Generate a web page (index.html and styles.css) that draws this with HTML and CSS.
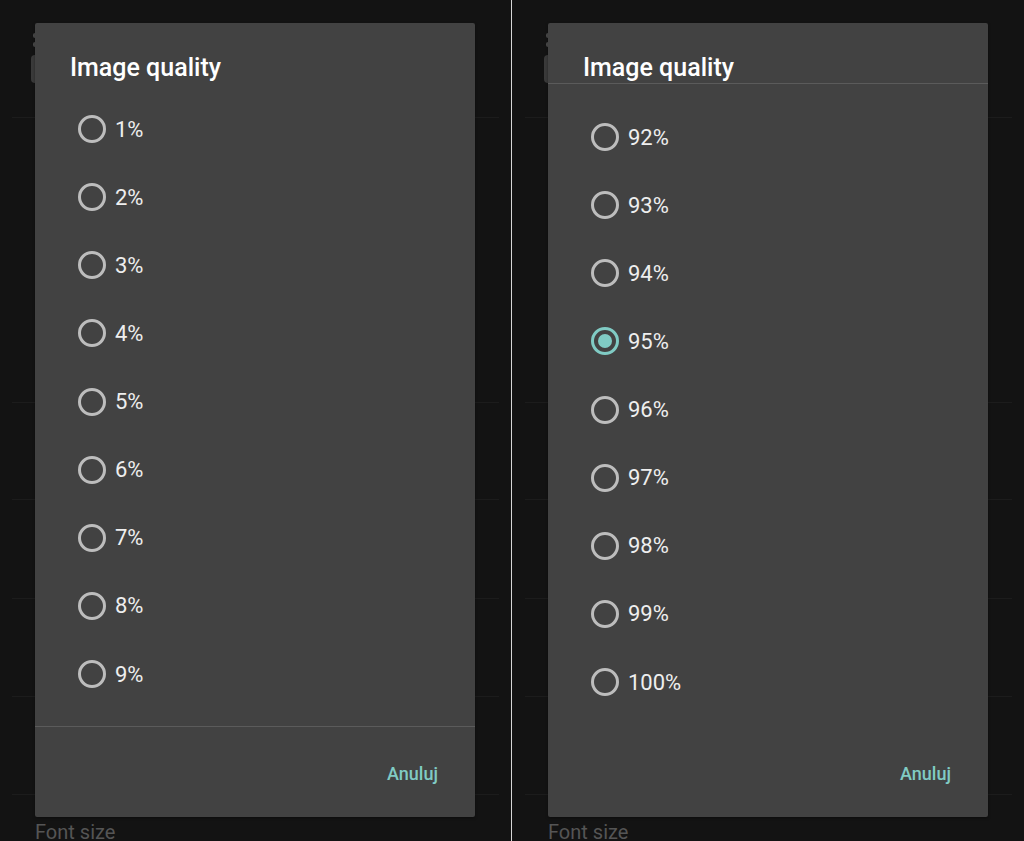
FILE: index.html
```html
<!DOCTYPE html>
<html lang="pl">
<head>
<meta charset="utf-8">
<title>Image quality</title>
<link rel="stylesheet" href="styles.css">
</head>
<body>
<div class="screen">
  <section class="panel panel-left">
    <div class="bg">
      <div class="bg-head"><span class="bg-icon"><i></i><i></i></span></div>
      <div class="bg-row tall"></div>
      <div class="bg-row r97"></div>
      <div class="bg-row r99"></div>
      <div class="bg-row r98"></div>
      <div class="bg-row r98"></div>
      <div class="bg-label">Font size</div>
    </div>
    <div class="dialog">
      <h1 class="dialog-title">Image quality</h1>
      <ul class="options first">
        <li class="option"><span class="radio"></span><span class="label">1%</span></li>
        <li class="option"><span class="radio"></span><span class="label">2%</span></li>
        <li class="option"><span class="radio"></span><span class="label">3%</span></li>
        <li class="option"><span class="radio"></span><span class="label">4%</span></li>
        <li class="option"><span class="radio"></span><span class="label">5%</span></li>
        <li class="option"><span class="radio"></span><span class="label">6%</span></li>
        <li class="option"><span class="radio"></span><span class="label">7%</span></li>
        <li class="option"><span class="radio"></span><span class="label">8%</span></li>
        <li class="option"><span class="radio"></span><span class="label">9%</span></li>
      </ul>
      <div class="dialog-footer with-divider"><span class="btn">Anuluj</span></div>
    </div>
  </section>
  <div class="split"></div>
  <section class="panel panel-right">
    <div class="bg">
      <div class="bg-head"><span class="bg-icon"><i></i><i></i></span></div>
      <div class="bg-row tall"></div>
      <div class="bg-row r97"></div>
      <div class="bg-row r99"></div>
      <div class="bg-row r98"></div>
      <div class="bg-row r98"></div>
      <div class="bg-label">Font size</div>
    </div>
    <div class="dialog">
      <h1 class="dialog-title scrolled">Image quality</h1>
      <ul class="options last">
        <li class="option"><span class="radio"></span><span class="label">92%</span></li>
        <li class="option"><span class="radio"></span><span class="label">93%</span></li>
        <li class="option"><span class="radio"></span><span class="label">94%</span></li>
        <li class="option"><span class="radio checked"></span><span class="label">95%</span></li>
        <li class="option"><span class="radio"></span><span class="label">96%</span></li>
        <li class="option"><span class="radio"></span><span class="label">97%</span></li>
        <li class="option"><span class="radio"></span><span class="label">98%</span></li>
        <li class="option"><span class="radio"></span><span class="label">99%</span></li>
        <li class="option"><span class="radio"></span><span class="label">100%</span></li>
      </ul>
      <div class="dialog-footer"><span class="btn">Anuluj</span></div>
    </div>
  </section>
</div>
</body>
</html>
```

FILE: styles.css
```css
html, body {
  margin: 0;
  padding: 0;
  background: #131313;
}
body {
  font-family: Roboto, "Noto Sans", "Liberation Sans", sans-serif;
  width: 1024px;
  height: 841px;
  overflow: hidden;
}
.screen {
  display: flex;
  width: 1024px;
  height: 841px;
}
.panel {
  position: relative;
  height: 841px;
  overflow: hidden;
  background: #131313;
  --inset: 35px;
}
.panel-left { width: 511px; }
.panel-right { width: 512px; --inset: 36px; }
.split {
  width: 1px;
  height: 841px;
  background: #d6d6d6;
}

/* background list, mostly hidden behind the dialog */
.bg {
  display: flex;
  flex-direction: column;
  padding: 0 12px 0 calc(var(--inset) - 23px);
}
.bg-head {
  position: relative;
  height: 117px;
  border-bottom: 1px solid #1c1c1c;
}
.bg-icon {
  position: absolute;
  left: 19px;
  top: 33px;
  width: 40px;
  height: 50px;
  display: flex;
  flex-direction: column;
  gap: 4px;
}
.bg-icon i {
  display: block;
  height: 5px;
  width: 30px;
  margin-left: 2px;
  background: #4a4a4a;
  border-radius: 2px;
}
.bg-icon::after {
  content: "";
  display: block;
  margin-top: 4px;
  height: 28px;
  background: #3a3a3a;
  border-radius: 4px;
}
.bg-row { border-bottom: 1px solid #1c1c1c; }
.bg-row.tall { height: 284px; }
.bg-row.r97 { height: 96px; }
.bg-row.r99 { height: 98px; }
.bg-row.r98 { height: 97px; }
.bg-label {
  margin-top: 25px;
  padding-left: 23px;
  font-size: 20px;
  line-height: 24px;
  color: #555555;
}

/* dialog */
.dialog {
  position: absolute;
  left: var(--inset);
  top: 23px;
  width: 440px;
  height: 794px;
  background: #424242;
  border-radius: 2px;
  box-shadow: 0 1px 3px rgba(0, 0, 0, 0.35);
  display: flex;
  flex-direction: column;
}
.dialog-title {
  margin: 0;
  padding: 30px 35px 0;
  height: 30px;
  font-size: 25px;
  line-height: 30px;
  font-weight: 500;
  color: #ffffff;
  border-bottom: 1px solid transparent;
}
.dialog-title.scrolled { border-bottom-color: #5b5b5b; }
.options {
  list-style: none;
  margin: 0;
  padding: 11px 0 0;
  flex: 1;
}
.options.last { padding-top: 19px; }
.option {
  height: 68.125px;
  display: flex;
  align-items: center;
  gap: 9px;
  padding-left: 43px;
}
.radio {
  box-sizing: border-box;
  width: 28px;
  height: 28px;
  border: 3px solid #bdbdbd;
  border-radius: 50%;
  display: flex;
  align-items: center;
  justify-content: center;
  flex: none;
}
.radio.checked { border-color: #80cbc4; }
.radio.checked::after {
  content: "";
  width: 14px;
  height: 14px;
  border-radius: 50%;
  background: #80cbc4;
}
.label {
  font-size: 22px;
  line-height: 26px;
  padding-top: 1px;
  color: #eeeeee;
}
.dialog-footer {
  height: 90px;
  border-top: 1px solid transparent;
  display: flex;
  justify-content: flex-end;
  align-items: flex-start;
  padding-right: 37px;
}
.dialog-footer.with-divider { border-top-color: #5b5b5b; }
.btn {
  margin-top: 35px;
  font-size: 18px;
  line-height: 24px;
  font-weight: 500;
  color: #80cbc4;
}
```
